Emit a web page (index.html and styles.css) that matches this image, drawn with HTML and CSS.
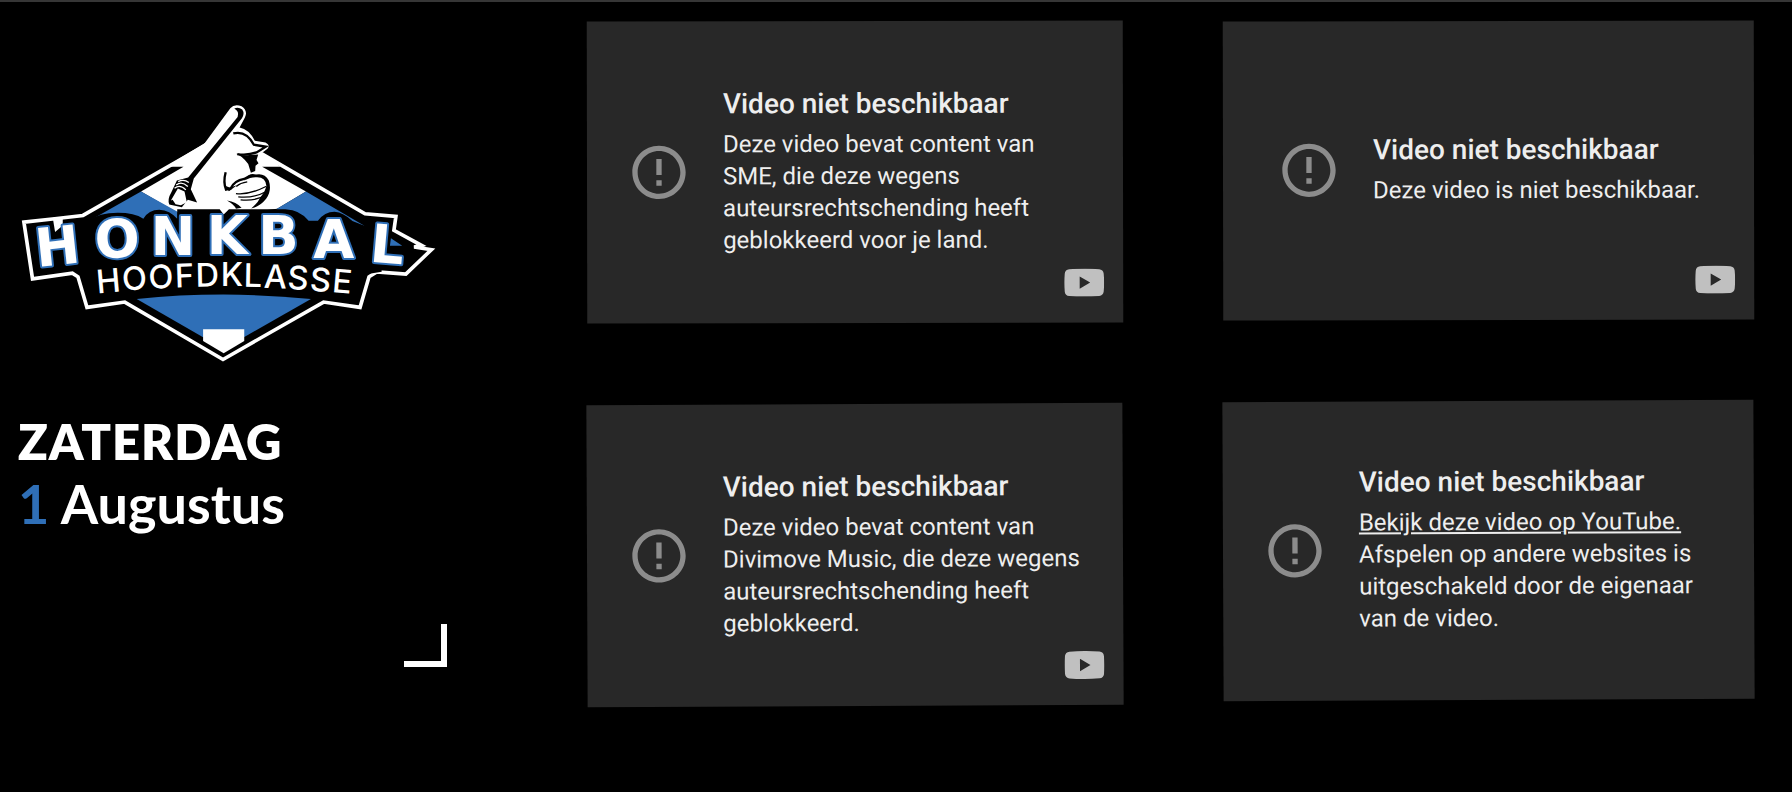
FILE: index.html
```html
<!DOCTYPE html>
<html lang="nl">
<head>
<meta charset="utf-8">
<meta name="viewport" content="width=device-width, initial-scale=1">
<title>Honkbal Hoofdklasse</title>
<link rel="stylesheet" href="styles.css">
</head>
<body>
<svg class="symbols" aria-hidden="true">
  <symbol id="alert" viewBox="0 0 24 24">
    <path d="M11 15h2v2h-2zm0-8h2v6h-2zm1-5C6.480 2 2 6.480 2 12s4.480 10 10 10 10-4.480 10-10S17.520 2 12 2zm0 18c-4.420 0-8-3.580-8-8s3.580-8 8-8 8 3.580 8 8-3.580 8-8 8z"/>
  </symbol>
  <symbol id="play" viewBox="0 0 40 28">
    <path fill-rule="evenodd" d="M5 .6Q20-.6 35 .6Q39 1 39.500 5Q40.400 14 39.500 23Q39 27 35 27.400Q20 28.600 5 27.400Q1 27 .5 23Q-.4 14 .5 5Q1 1 5 .6ZM15.500 7.800V20.200L26 14Z"/>
  </symbol>
</svg>
<main class="page">
  <section class="intro">
    <svg class="logo" viewBox="0 0 1350 870" role="img" aria-label="Honkbal Hoofdklasse">
      <path class="frame" d="M72 395L165 385L250 375L625 160L790 190L1100 370L1193 378L1187 420L1270 465L1248 470L1300 478L1223 552L1135 545L1112 560L1085 652L975 636L672 809L376 636L262 652L235 560L218 549L98 566Z"/>
      <path class="white" d="M425 303L553 228H500L625 152L790 186L845 228H790L922 303L835 355L674 375L530 365Z"/>
      <path class="blue" d="M425 303L535 364V410L268 392ZM922 303L1098 406H930L832 356ZM1178 444L1212 466H1175Z"/>
      <path class="blue" d="M412 627Q672 600 937 627L735 742H612Z"/>
      <path class="white" d="M612 718H736V753L674 790L612 753Z"/>
      <!-- batter and bat -->
      <path class="white" d="M615 160L694 52Q706 38 728 46Q748 60 738 80L722 110Q750 115 768 150L800 155Q816 163 806 174L782 192L780 230L815 290L775 352H540L505 330L515 285L570 250Z"/>
      <path d="M706 53Q718 46 730 56Q738 68 729 82L584 264L575 296L594 336L566 328L548 350L510 342Q504 326 516 306L533 270L567 261L716 78Q722 62 706 53Z"/>
      <path class="white" d="M515 330L536 294L556 303L563 335L545 344L529 341L520 328Z"/>
      <path class="glove" d="M526 293Q542 280 560 298M531 283Q548 270 566 288M537 273Q554 264 569 276"/>
      <path class="line" d="M703 128C738 119 756 145 765 162L801 168L773 185Q745 195 715 190"/>
      <path d="M711 189Q735 196 752 193L778 191L773 208L779 218L770 225L769 241L756 246L748 220Q730 195 711 189Z"/>
      <path class="line" d="M680 245Q672 275 681 297L695 294Q706 270 736 265L752 256"/>
      <path d="M749 254Q760 247 771 252Q797 246 810 270Q820 300 802 325Q782 350 757 354Q777 337 785 320Q798 306 803 287Q801 260 775 260Q758 258 735 270L750 258ZM676 285L690 302L714 284L692 291ZM684 330Q712 334 728 352L711 355Q705 341 684 330Z"/>
      <path class="fine" d="M711 309Q750 314 803 287M718 319Q764 324 804 302M725 328Q767 333 802 314M712 288Q724 277 745 274"/>
      <!-- banner behind the wordmark -->
      <path d="M200 400L262 392Q300 367 355 367Q405 367 432 385Q448 358 480 358Q512 360 534 385V356H662L674 372L690 356H860Q905 358 930 391H958Q978 364 1008 364Q1035 366 1062 392L1098 406H1150V545L900 585H330L262 530Z"/>
      <path class="white" d="M159 382H189V405L166 425Z"/>
      <text class="name" x="112 287 454 623 778 944 1112" y="530 504 494 491 491 502 514" rotate="-6 -2 0 0 0 0 5">HONKBAL</text>
      <text class="league" x="293 370 449 528 590 665 734 794 865 932 999" y="610 602 597 592 590 589 590 593 597 602 606" rotate="-5 -4 -3 -2 -1 0 1 2 3 4 5">HOOFDKLASSE</text>
    </svg>
    <h1 class="date"><span class="day">ZATERDAG</span><span class="month"><span class="number">1</span> Augustus</span></h1>
    <span class="corner"></span>
  </section>

  <section class="videos">
    <div class="column">
      <article class="video upper">
        <svg class="alert"><use href="#alert"/></svg>
        <div class="message"><h2>Video niet beschikbaar</h2><p>Deze video bevat content van SME, die deze wegens auteursrechtschending heeft geblokkeerd voor je land.</p></div>
        <a class="play" href="#" aria-label="YouTube"><svg><use href="#play"/></svg></a>
      </article>
      <article class="video lower">
        <svg class="alert"><use href="#alert"/></svg>
        <div class="message"><h2>Video niet beschikbaar</h2><p>Deze video bevat content van Divimove Music, die deze wegens auteursrechtschending heeft geblokkeerd.</p></div>
        <a class="play" href="#" aria-label="YouTube"><svg><use href="#play"/></svg></a>
      </article>
    </div>
    <div class="column">
      <article class="video upper">
        <svg class="alert"><use href="#alert"/></svg>
        <div class="message"><h2>Video niet beschikbaar</h2><p>Deze video is niet beschikbaar.</p></div>
        <a class="play" href="#" aria-label="YouTube"><svg><use href="#play"/></svg></a>
      </article>
      <article class="video lower">
        <svg class="alert"><use href="#alert"/></svg>
        <div class="message"><h2>Video niet beschikbaar</h2><p><a href="#">Bekijk deze video op YouTube.</a> Afspelen op andere websites is uitgeschakeld door de eigenaar van de video.</p></div>
      </article>
    </div>
  </section>
</main>
</body>
</html>
```
FILE: styles.css
```css
* { box-sizing: border-box; }

body {
  margin: 0;
  background: #000;
  color: #fff;
  font-family: Roboto, "Liberation Sans", sans-serif;
}

.symbols { display: none; }

.page {
  display: grid;
  grid-template-columns: 25% 1fr;
  min-height: 100vh;
  border-top: 2px solid #363636;
}

.intro {
  display: flex;
  flex-direction: column;
  align-items: flex-start;
  align-self: start;
  padding-top: 89px;
}

.logo { width: 100%; height: auto; }
.frame { fill: #000; stroke: #fff; stroke-width: 11; }
.white { fill: #fff; }
.blue { fill: #2f6fb7; }
.line { fill: none; stroke: #000; stroke-width: 7; }
.glove { fill: none; stroke: #fff; stroke-width: 4; }
.fine { fill: none; stroke: #000; stroke-width: 4; }
.name {
  fill: #fff;
  stroke: #2f6fb7;
  stroke-width: 12;
  stroke-linejoin: round;
  paint-order: stroke;
  font-family: "DejaVu Sans", sans-serif;
  font-size: 160px;
  font-weight: 700;
}
.league { fill: #fff; font-family: Inter, sans-serif; font-size: 98px; font-weight: 500; }

.date {
  display: flex;
  flex-direction: column;
  margin: 30px 0 0 18px;
  font-family: Lato, sans-serif;
  font-weight: 700;
}
.day { font-size: 49px; font-weight: 800; line-height: 62px; letter-spacing: 1px; }
.month { font-size: 54px; line-height: 64px; }
.number { color: #2f6fb7; }

.corner {
  align-self: flex-end;
  width: 43px;
  height: 43px;
  margin: 88px 1px 0 0;
  border: solid #fff;
  border-width: 0 6px 6px 0;
}

.videos {
  display: grid;
  grid-template-columns: 536fr 531fr;
  gap: 100px;
  padding: 19px 38px 60px 139px;
}
.column { display: flex; flex-direction: column; gap: 81px; }

.video {
  position: relative;
  display: flex;
  align-items: center;
  justify-content: center;
  gap: 32px;
  aspect-ratio: 16 / 9;
  padding: 0 40px;
  background: #282828;
}
.upper { transform: rotate(-0.1deg); }
.lower { transform: rotate(-0.25deg); }

.alert { flex: none; width: 64px; height: 64px; fill: #8c8c8c; }
.message { padding-bottom: 4px; color: #eee; }
.message h2 { margin: 0 0 4px; font-size: 28px; font-weight: 500; line-height: 40px; }
.message p { margin: 0; font-size: 24px; line-height: 32px; }
.message a { color: inherit; }

.play { position: absolute; right: 19px; bottom: 26px; display: flex; }
.play svg { width: 40px; height: 28px; fill: #c0c0c0; }
```
